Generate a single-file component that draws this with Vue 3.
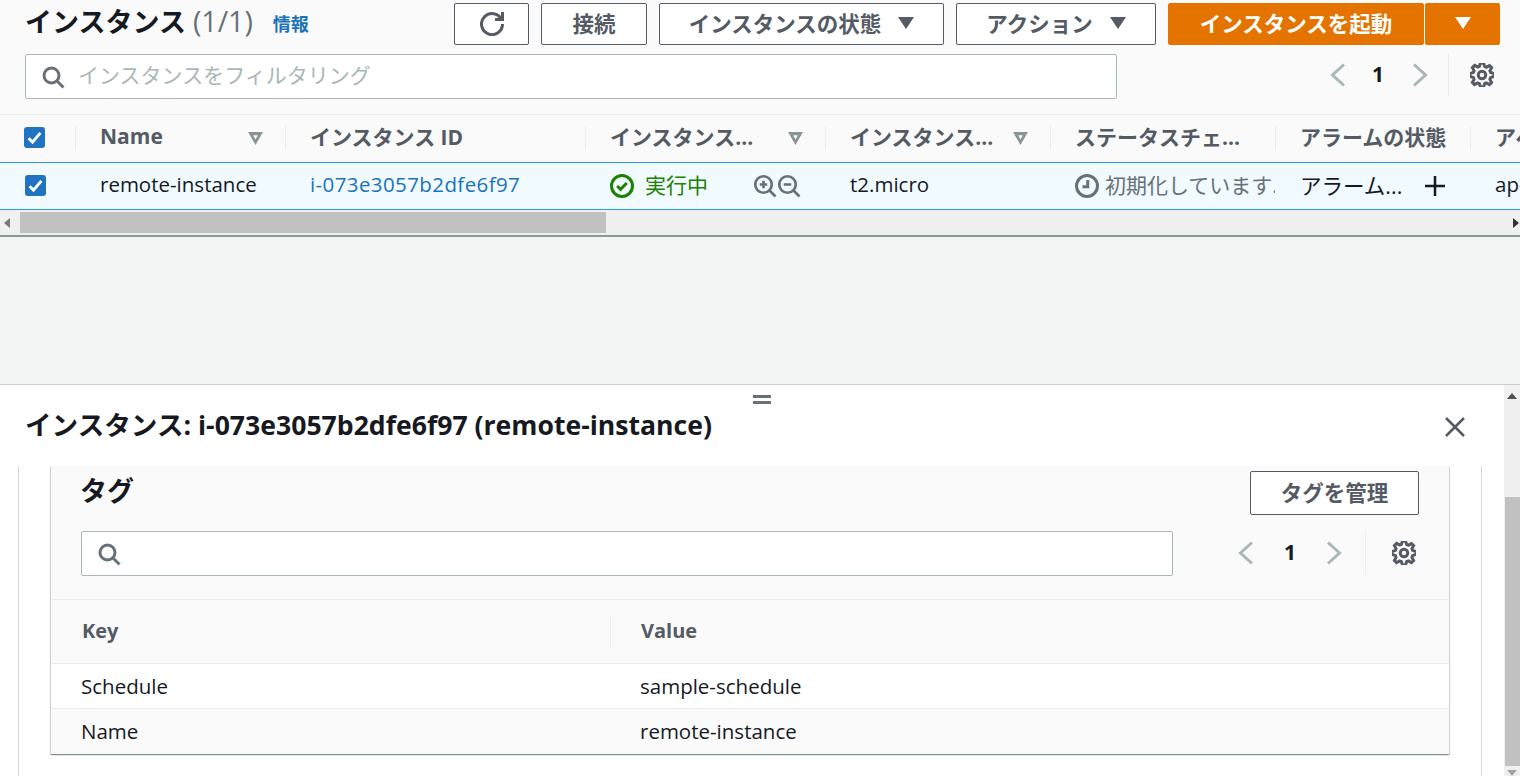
<template>
  <div class="page">
    <section class="top">
      <div class="actions">
        <h1 class="title">インスタンス <span class="count">(1/1)</span></h1>
        <a class="info">情報</a>
        <div class="buttons">
          <button class="btn btn--refresh">
            <svg class="ico" viewBox="0 0 16 16"><path d="M10 5h5V0" /><path d="M15 8a7 7 0 1 1-.7-3" /></svg>
          </button>
          <button class="btn btn--connect">接続</button>
          <button class="btn btn--state">インスタンスの状態<i class="caret"></i></button>
          <button class="btn btn--action">アクション<i class="caret"></i></button>
          <button class="btn btn--launch">インスタンスを起動</button>
          <button class="btn btn--more"><i class="caret caret--white"></i></button>
        </div>
      </div>

      <div class="filter-row">
        <div class="search search--top">
          <svg class="ico ico--search" viewBox="0 0 16 16"><circle cx="7" cy="7" r="5" /><path d="m15 15-4.5-4.5" /></svg>
          <span class="placeholder">インスタンスをフィルタリング</span>
        </div>
        <div class="pager pager--top">
          <svg class="chev" viewBox="0 0 16 24"><path d="M14 1.500 2.500 12 14 22.500" /></svg>
          <b>1</b>
          <svg class="chev" viewBox="0 0 16 24"><path d="M2 1.500 13.500 12 2 22.500" /></svg>
          <span class="pager__sep"></span>
          <svg class="ico ico--gear" viewBox="0 0 16 16"><path d="M13.3 5.2l1.1-2.1L13 1.7l-2.1 1.1c-.3-.2-.7-.3-1.1-.4L9 0H7l-.8 2.3c-.3.1-.7.2-1 .4L3.1 1.6 1.6 3.1l1.1 2.1c-.2.3-.3.7-.4 1L0 7v2l2.3.8c.1.4.3.7.4 1.1l-1.1 2.1 1.4 1.4 2.1-1.1c.3.2.7.3 1.1.4L7 16h2l.8-2.3c.4-.1.7-.3 1.1-.4l2.1 1.1 1.4-1.4-1.1-2.1c.2-.3.3-.7.4-1.1L16 9V7l-2.3-.8c-.1-.3-.2-.7-.4-1z" /><circle cx="8" cy="8" r="2.500" /></svg>
        </div>
      </div>

      <div class="table">
        <div class="thead grid">
          <div class="th th--check"><span class="check"><svg viewBox="0 0 16 16"><path d="m3.500 8.500 3 3 6-7" /></svg></span></div>
          <div v-for="c in columns" :key="c.label" class="th">
            <span class="th__label">{{ c.label }}</span>
            <svg v-if="c.sort" class="sort" viewBox="0 0 16 14"><path d="M0 0h16L8 14z" /><path class="sort__hole" d="M5.500 3.500h5L8 8z" /></svg>
          </div>
        </div>
        <div class="trow grid">
          <div class="td td--check"><span class="check"><svg viewBox="0 0 16 16"><path d="m3.500 8.500 3 3 6-7" /></svg></span></div>
          <div class="td">remote-instance</div>
          <div class="td"><a class="link">i-073e3057b2dfe6f97</a></div>
          <div class="td td--state">
            <svg class="ico ico--row ico--ok" viewBox="0 0 16 16"><circle cx="8" cy="8" r="7" /><path d="m4.800 8 2.200 2.200 4.200-4.200" /></svg>
            <span class="running">実行中</span>
            <span class="zooms">
              <svg class="ico ico--row ico--zoom" viewBox="0 0 16 16"><circle cx="7" cy="7" r="5.500" /><path d="m15 15-4-4M4.500 7h5M7 4.500v5" /></svg>
              <svg class="ico ico--row ico--zoom" viewBox="0 0 16 16"><circle cx="7" cy="7" r="5.500" /><path d="m15 15-4-4M4.500 7h5" /></svg>
            </span>
          </div>
          <div class="td">t2.micro</div>
          <div class="td td--pending">
            <svg class="ico ico--row ico--clock" viewBox="0 0 16 16"><circle cx="8" cy="8" r="7" /><path d="M8.500 4v4.500H5" /></svg>
            <span class="pending">初期化しています...</span>
          </div>
          <div class="td td--alarm">
            <span class="alarm">アラーム...</span>
            <svg class="plus" viewBox="0 0 22 22"><path d="M11 1v20M1 11h20" /></svg>
          </div>
          <div class="td td--last">ap-northeast-1a</div>
        </div>
        <div class="hbar">
          <i class="tri tri--left"></i>
          <div class="hbar__track"><div class="hbar__thumb"></div></div>
          <i class="tri tri--right"></i>
        </div>
      </div>
    </section>

    <div class="gap"></div>

    <section class="split">
      <div class="handle"></div>
      <div class="split__main">
        <header class="split__head">
          <h2>インスタンス: i-073e3057b2dfe6f97 (remote-instance)</h2>
          <svg class="close" viewBox="0 0 20 20"><path d="m1 1 18 18M19 1 1 19" /></svg>
        </header>
        <div class="body">
          <div class="card">
            <div class="card__head">
              <h3>タグ</h3>
              <button class="btn btn--tags">タグを管理</button>
            </div>
            <div class="card__filter">
              <div class="search search--tags">
                <svg class="ico ico--search" viewBox="0 0 16 16"><circle cx="7" cy="7" r="5" /><path d="m15 15-4.500-4.500" /></svg>
              </div>
              <div class="pager pager--tags">
                <svg class="chev" viewBox="0 0 16 24"><path d="M14 1.500 2.500 12 14 22.500" /></svg>
                <b>1</b>
                <svg class="chev" viewBox="0 0 16 24"><path d="M2 1.500 13.500 12 2 22.500" /></svg>
                <span class="pager__sep"></span>
                <svg class="ico ico--gear" viewBox="0 0 16 16"><path d="M13.3 5.2l1.1-2.1L13 1.7l-2.1 1.1c-.3-.2-.7-.3-1.1-.4L9 0H7l-.8 2.3c-.3.1-.7.2-1 .4L3.1 1.6 1.6 3.1l1.1 2.1c-.2.3-.3.7-.4 1L0 7v2l2.3.8c.1.4.3.7.4 1.1l-1.1 2.1 1.4 1.4 2.1-1.1c.3.2.7.3 1.1.4L7 16h2l.8-2.3c.4-.1.7-.3 1.1-.4l2.1 1.1 1.4-1.4-1.1-2.1c.2-.3.3-.7.4-1.1L16 9V7l-2.3-.8c-.1-.3-.2-.7-.4-1z" /><circle cx="8" cy="8" r="2.500" /></svg>
              </div>
            </div>
            <div class="tags-head tags-grid">
              <div>Key</div>
              <div class="tags-head__value">Value</div>
            </div>
            <div v-for="t in tags" :key="t.key" class="tags-row tags-grid">
              <div>{{ t.key }}</div>
              <div class="tags-row__value">{{ t.value }}</div>
            </div>
          </div>
        </div>
      </div>
      <div class="vbar">
        <i class="tri tri--up"></i>
        <div class="vbar__track"><div class="vbar__thumb"></div></div>
        <i class="tri tri--down"></i>
      </div>
    </section>
  </div>
</template>

<script setup>
const columns = [
  { label: 'Name', sort: true },
  { label: 'インスタンス ID', sort: false },
  { label: 'インスタンス...', sort: true },
  { label: 'インスタンス...', sort: true },
  { label: 'ステータスチェ...', sort: false },
  { label: 'アラームの状態', sort: false },
  { label: 'アベイラビリティ', sort: false },
]

const tags = [
  { key: 'Schedule', value: 'sample-schedule' },
  { key: 'Name', value: 'remote-instance' },
]
</script>

<style>
html, body { margin: 0; overflow: hidden; }
</style>

<style scoped>
.page {
  width: 1520px;
  height: 776px;
  display: flex;
  flex-direction: column;
  overflow: hidden;
  background: #f2f3f3;
  color: #16191f;
  font-family: "Open Sans", "Noto Sans CJK JP", sans-serif;
  font-size: 20.5px;
}

h1, h2, h3 { margin: 0; }

.ico { fill: none; stroke: #545b64; stroke-width: 2; display: block; flex: none; }

/* top panel */
.top { background: #fafafa; height: 237px; flex: none; box-sizing: border-box; border-bottom: 2px solid #8f9696; }

.actions { height: 54px; padding: 3px 20px 0 25px; box-sizing: border-box; display: flex; align-items: flex-start; }
.title { font-size: 27px; font-weight: 700; line-height: 36px; white-space: nowrap; }
.count { font-size: 28.500px; font-weight: 400; color: #687078; }
.info { margin: 8px 0 0 20px; color: #1a73ba; font-size: 18px; font-weight: 700; line-height: 26px; }

.buttons { margin-left: auto; display: flex; }
.btn {
  height: 42px;
  box-sizing: border-box;
  padding: 0 0 3px;
  border: 1px solid #545b64;
  border-radius: 2px;
  background: #fff;
  color: #545b64;
  font: 700 21.5px "Open Sans", "Noto Sans CJK JP", sans-serif;
  display: flex;
  align-items: center;
  justify-content: center;
}
.btn--refresh { width: 75px; }
.btn--refresh .ico { width: 24px; height: 24px; margin-top: 3px; }
.btn--connect { width: 106px; margin-left: 12px; }
.btn--state { width: 285px; margin-left: 12px; }
.btn--action { width: 200px; margin-left: 12px; }
.btn--launch { width: 256px; margin-left: 12px; background: #e57300; border-color: #e57300; color: #fff; }
.btn--more { width: 75px; margin-left: 1px; background: #e57300; border-color: #e57300; }

.caret { width: 0; height: 0; margin-left: 17px; border: 8px solid transparent; border-top: 12px solid #545b64; border-bottom: 0; }
.caret--white { margin-left: 0; border-top-color: #fff; }

.filter-row { height: 60px; padding-left: 25px; display: flex; align-items: flex-start; box-sizing: border-box; }

.search {
  height: 45px;
  box-sizing: border-box;
  border: 1px solid #aab7b8;
  border-radius: 2px;
  background: #fff;
  display: flex;
  align-items: center;
}
.search--top { width: 1092px; padding-left: 15px; }
.search--tags { width: 1092px; padding-left: 15px; }
.ico--search { width: 24px; height: 24px; stroke: #687078; stroke-width: 2; }
.placeholder { margin-left: 13px; padding-bottom: 6px; color: #aab7b8; font-size: 21px; white-space: nowrap; }

.pager { display: flex; align-items: center; }
.pager b { width: 22px; padding-bottom: 2px; text-align: center; font-size: 21px; font-weight: 700; }
.chev { width: 16px; height: 24px; fill: none; stroke: #aab7b8; stroke-width: 3; display: block; }
.pager__sep { width: 1px; background: #eaeded; align-self: stretch; }
.ico--gear { width: 24px; height: 24px; stroke-width: 2; }

.pager--top { height: 42px; margin-left: 213px; }
.pager--top b { margin: 0 23px 0 21px; }
.pager--top .pager__sep { margin: 0 21px 0 20px; }

.pager--tags { height: 44px; margin-left: 65px; }
.pager--tags b { margin: 0 25px; }
.pager--tags .pager__sep { margin: 0 26px 0 23px; }

/* instance table */
.grid { display: grid; grid-template-columns: 75px 210px 300px 240px 225px 225px 195px 50px; }

.thead { height: 48px; border-top: 1px solid #eaeded; box-sizing: border-box; }
.th {
  position: relative;
  display: flex;
  align-items: center;
  justify-content: space-between;
  padding: 0 22px 0 25px;
  box-sizing: border-box;
  overflow: hidden;
  color: #545b64;
  font-size: 21px;
  font-weight: 700;
  white-space: nowrap;
}
.th__label { padding-bottom: 5px; }
.th::before { content: ""; position: absolute; left: 0; top: 11px; height: 24px; width: 1px; background: #eaeded; }
.th--check::before { display: none; }
.th--check { padding: 0 0 2px 24px; }
.sort { width: 15px; height: 13px; flex: none; fill: #879596; }
.sort__hole { fill: #fafafa; }

.trow { height: 48px; background: #f1faff; border-top: 1px solid #2b9fd4; border-bottom: 1px solid #2b9fd4; box-sizing: border-box; }
.td { display: flex; align-items: center; padding: 0 0 4px 25px; overflow: hidden; white-space: nowrap; box-sizing: border-box; }
.td--check { padding-bottom: 2px; }

.check { width: 21px; height: 21px; border-radius: 3px; background: #1f73c0; display: block; }
.check svg { width: 21px; height: 21px; display: block; fill: none; stroke: #fff; stroke-width: 2.200; }

.link { color: #1a73ba; letter-spacing: .4px; }
.ico--row { width: 24px; height: 24px; margin-top: 3px; }
.ico--ok { stroke: #1d8102; }
.running { margin-left: 11px; color: #1d8102; font-size: 21px; }
.zooms { margin-left: 45px; display: flex; }
.ico--zoom { stroke: #687078; stroke-width: 1.800; }
.ico--clock { stroke: #687078; }
.pending { margin-left: 6px; color: #687078; font-size: 21px; }
.td--alarm { padding-right: 24px; justify-content: space-between; }
.alarm { font-size: 21.500px; }
.plus { width: 22px; height: 22px; margin-top: 4px; fill: none; stroke: #16191f; stroke-width: 2.500; flex: none; }

.hbar { height: 25px; background: #f0f0f0; display: flex; align-items: center; }
.hbar__track { flex: 1; height: 21px; }
.hbar__thumb { width: 586px; height: 21px; margin-left: 4px; background: #c1c1c1; }

.tri { width: 0; height: 0; display: block; flex: none; border: 5px solid transparent; }
.tri--left { margin-left: 4px; margin-right: 6px; border-right: 6px solid #787878; border-left: 0; }
.tri--right { margin-right: 1px; margin-left: 3px; border-left: 6px solid #333; border-right: 0; }
.tri--up { margin: 8px auto 0; border-bottom: 6px solid #505050; border-top: 0; }
.tri--down { margin: 4px auto 0; border-top: 6px solid #a3a3a3; border-bottom: 0; }

.gap { height: 147px; flex: none; }

/* split panel */
.split { position: relative; flex: 1; min-height: 0; display: flex; background: #fff; border-top: 1px solid #c9cece; }
.handle { position: absolute; left: 753px; top: 10px; width: 18px; height: 9px; box-sizing: border-box; border-top: 3px solid #687078; border-bottom: 3px solid #687078; }
.split__main { flex: 1; min-width: 0; display: flex; flex-direction: column; }
.split__head { height: 81px; flex: none; box-sizing: border-box; padding: 18px 39px 0 25px; display: flex; align-items: flex-start; justify-content: space-between; }
.split__head h2 { font-size: 26.600px; line-height: 44px; font-weight: 700; white-space: nowrap; }
.close { width: 20px; height: 20px; margin-top: 14px; fill: none; stroke: #545b64; stroke-width: 2.500; }

.body { flex: 1; margin-left: 18px; margin-right: 22px; padding: 0 32px 0 32px; border-left: 1px solid #d5dbdb; border-right: 1px solid #d5dbdb; }
.card { background: #fafafa; box-shadow: 0 1px 1px 0 rgba(0, 28, 36, .3), 1px 1px 1px 0 rgba(0, 28, 36, .15), -1px 1px 1px 0 rgba(0, 28, 36, .15); }

.card__head { height: 65px; padding: 4px 30px 0 29px; display: flex; justify-content: space-between; align-items: flex-start; box-sizing: border-box; }
.card__head h3 { font-size: 27px; line-height: 42px; font-weight: 700; }
.btn--tags { width: 169px; height: 44px; margin-top: 1px; }

.card__filter { height: 69px; padding-left: 30px; box-sizing: border-box; display: flex; align-items: flex-start; border-bottom: 1px solid #eaeded; }

.tags-grid { display: grid; grid-template-columns: 529px 1fr; padding-left: 30px; }
.tags-head { height: 64px; align-items: center; box-sizing: border-box; color: #545b64; font-size: 20px; font-weight: 700; border-bottom: 1px solid #eaeded; }
.tags-head > div:first-child { padding: 0 0 2px 1px; }
.tags-head__value { height: 32px; line-height: 30px; border-left: 1px solid #eaeded; padding-left: 30px; }
.tags-row { height: 45px; align-items: center; box-sizing: border-box; border-bottom: 1px solid #eaeded; }
.tags-row__value { padding-left: 30px; }
.tags-row:nth-of-type(even) { background: #fff; }
.tags-row:last-child { border-bottom: 0; padding-bottom: 2px; }

.vbar { width: 16px; flex: none; background: #f0f0f0; display: flex; flex-direction: column; }
.vbar__track { flex: 1; padding-top: 98px; box-sizing: border-box; display: flex; }
.vbar__thumb { width: 15px; margin-left: 1px; flex: 1; background: #c1c1c1; }
</style>
